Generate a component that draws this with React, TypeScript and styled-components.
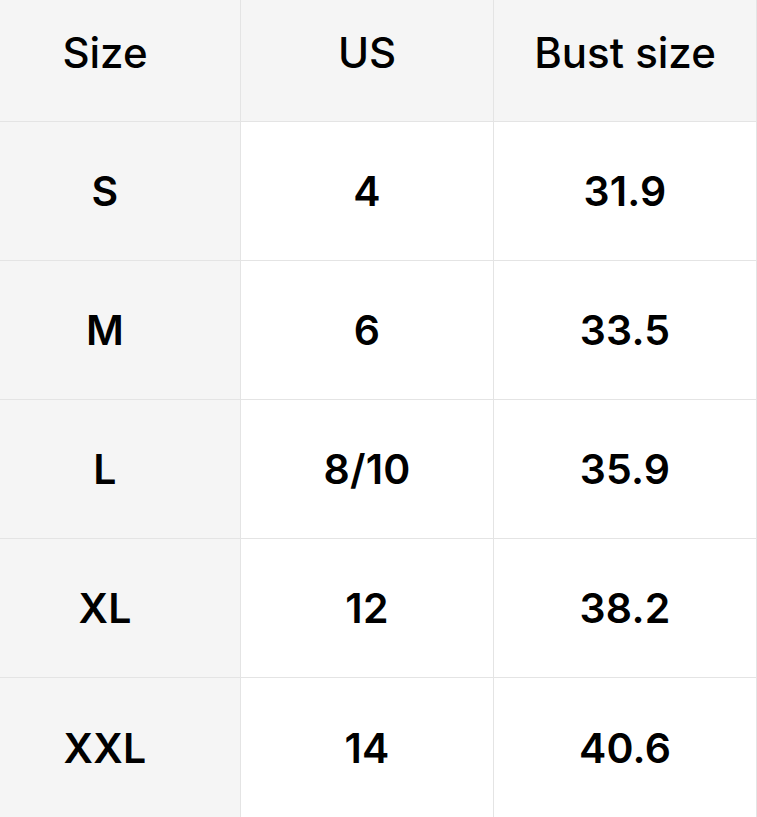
import React from 'react';
import styled, { createGlobalStyle } from 'styled-components';

const GlobalStyle = createGlobalStyle`
  html, body {
    margin: 0;
    padding: 0;
    background: #ffffff;
  }
  body {
    font-family: Inter, "Liberation Sans", sans-serif;
    color: #000;
  }
`;

const Grid = styled.div`
  display: grid;
  grid-template-columns: 240px 252px 262px;
  grid-template-rows: 121px repeat(4, 138px) 139px;
  gap: 1px;
  width: 756px;
  background: #e4e4e4;
  border-right: 1px solid #e4e4e4;
`;

const Cell = styled.div<{ $head?: boolean; $first?: boolean }>`
  display: flex;
  align-items: center;
  justify-content: center;
  background: ${(p) => (p.$head || p.$first ? '#f5f5f5' : '#ffffff')};
  font-size: ${(p) => (p.$head ? '42px' : '41px')};
  font-weight: ${(p) => (p.$head ? 500 : 600)};
  letter-spacing: ${(p) => (p.$head ? '0' : '0.2px')};
  padding-bottom: ${(p) => (p.$head ? '16px' : '0')};
  padding-right: ${(p) => (p.$first ? '30px' : '0')};
`;

const header = ['Size', 'US', 'Bust size'];

const rows = [
  ['S', '4', '31.9'],
  ['M', '6', '33.5'],
  ['L', '8/10', '35.9'],
  ['XL', '12', '38.2'],
  ['XXL', '14', '40.6'],
];

const App: React.FC = () => {
  return (
    <>
      <GlobalStyle />
      <Grid>
        {header.map((h, i) => (
          <Cell key={h} $head $first={i === 0}>
            {h}
          </Cell>
        ))}
        {rows.map((r) =>
          r.map((v, i) => (
            <Cell key={r[0] + i} $first={i === 0}>
              {v}
            </Cell>
          ))
        )}
      </Grid>
    </>
  );
};

export default App;
